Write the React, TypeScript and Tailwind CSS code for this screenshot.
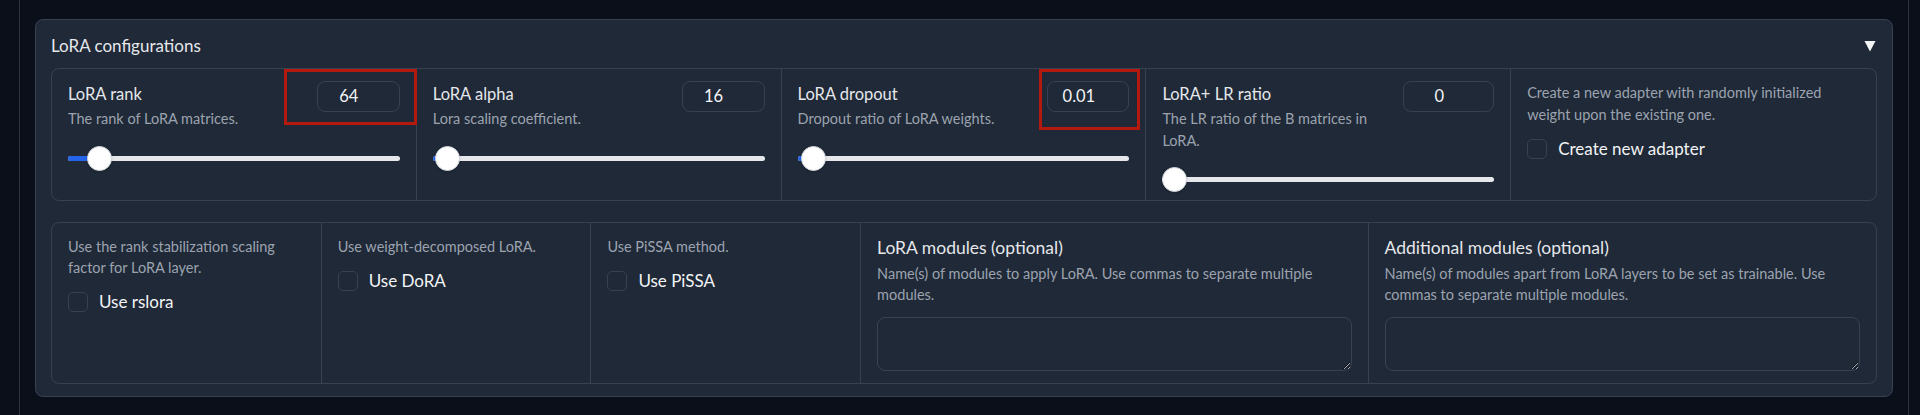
import React from 'react';

interface SliderFieldProps {
  label: string;
  info: string;
  value: string;
  fraction: number;
  inputWidth: string;
  highlight?: 'short' | 'tall';
}

const Slider: React.FC<{ fraction: number }> = ({ fraction }) => {
  // thumb travels between the two ends of the track, like a native range input
  const thumbLeft = `calc(${fraction} * (100% - 25px))`;
  const fillWidth = `calc(${fraction} * (100% - 25px) + 12.5px)`;
  return (
    <div className="relative mt-[16px] flex h-[25px] items-center">
      <div className="h-[5px] w-full overflow-hidden rounded-full bg-[#e5e7eb]">
        {fraction > 0 && <div className="h-full bg-[#2563eb]" style={{ width: fillWidth }} />}
      </div>
      <div
        className="absolute top-0 h-[25px] w-[25px] rounded-full border border-[#d1d5db] bg-white shadow-sm"
        style={{ left: thumbLeft }}
      />
    </div>
  );
};

const SliderField: React.FC<SliderFieldProps> = ({ label, info, value, fraction, inputWidth, highlight }) => (
  <div className="px-4 pt-3 pb-2">
    <div className="flex items-start justify-between gap-4">
      <div>
        <div className="text-[16.5px] leading-[26px] text-[#e5e7eb]">{label}</div>
        <div className="mt-px text-[14.5px] leading-[21.5px] text-[#9ca3af]">{info}</div>
      </div>
      <div className="relative shrink-0">
        <div
          className={`flex h-[31px] items-center justify-center rounded-lg border border-[#374151] pl-2 pr-[27px] text-[16.5px] text-[#f3f4f6] ${inputWidth}`}
        >
          <span className="w-full text-center">{value}</span>
        </div>
        {highlight === 'short' && (
          <div className="absolute top-[-12px] right-[-17px] h-[56px] w-[133px] border-[3px] border-[#b3190c]" />
        )}
        {highlight === 'tall' && (
          <div className="absolute top-[-12px] right-[-11px] h-[61px] w-[101px] border-[3px] border-[#b3190c]" />
        )}
      </div>
    </div>
    <Slider fraction={fraction} />
  </div>
);

const Checkbox: React.FC<{ label: string }> = ({ label }) => (
  <div className="mt-3 flex h-6 items-center gap-[11px]">
    <div className="h-[20px] w-[20px] shrink-0 rounded-[5px] border border-[#374151] bg-[#1f2937]" />
    <span className="text-[17px] leading-6 text-[#f3f4f6]">{label}</span>
  </div>
);

interface CheckFieldProps {
  info: string;
  label: string;
  box?: string;
  lead?: string;
}

const CheckField: React.FC<CheckFieldProps> = ({ info, label, box = 'pt-3', lead = 'leading-[21.5px]' }) => (
  <div className={`px-4 pb-3 ${box}`}>
    <div className={`text-[14.5px] text-[#9ca3af] ${lead}`}>{info}</div>
    <Checkbox label={label} />
  </div>
);

const TextField: React.FC<{ label: string; info: string }> = ({ label, info }) => (
  <div className="px-4 pt-[13px] pb-3">
    <div className="text-[17.5px] leading-6 text-[#e5e7eb]">{label}</div>
    <div className="mt-[3px] text-[14.5px] leading-[21px] text-[#9ca3af]">{info}</div>
    <textarea
      className="mt-3 block h-[54px] w-full resize-y rounded-lg border border-[#374151] bg-[#1f2937] [color-scheme:dark] outline-none"
      rows={2}
    />
  </div>
);

const App: React.FC = () => {
  return (
    <div className="h-[415px] overflow-hidden bg-[#0b0f19] font-['Lato','Noto_Sans',sans-serif]">
      <div className="mr-[11px] ml-[19px] h-full border-x border-[#2b3442] pt-[19px] pr-[15px] pl-[15px]">
        <div className="rounded-lg border border-[#374151] bg-[#1f2937] px-[15px] pt-[14px] pb-[12px]">
          <div className="flex h-6 items-center justify-between">
            <span className="text-[17px] text-[#e5e7eb]">LoRA configurations</span>
            <svg width="12" height="12" viewBox="0 0 12 12" className="mr-px">
              <polygon points="0.5,1 11.5,1 6,11.5" fill="#f3f4f6" />
            </svg>
          </div>

          <div className="mt-[10px] grid grid-cols-5 divide-x divide-[#374151] rounded-lg border border-[#374151]">
            <SliderField
              label="LoRA rank"
              info="The rank of LoRA matrices."
              value="64"
              fraction={0.0615}
              inputWidth="w-[83px]"
              highlight="short"
            />
            <SliderField
              label="LoRA alpha"
              info="Lora scaling coefficient."
              value="16"
              fraction={0.006}
              inputWidth="w-[83px]"
            />
            <SliderField
              label="LoRA dropout"
              info="Dropout ratio of LoRA weights."
              value="0.01"
              fraction={0.01}
              inputWidth="w-[82px]"
              highlight="tall"
            />
            <SliderField
              label="LoRA+ LR ratio"
              info="The LR ratio of the B matrices in LoRA."
              value="0"
              fraction={0}
              inputWidth="w-[91px]"
            />
            <CheckField
              box="pt-[13px]"
              info="Create a new adapter with randomly initialized weight upon the existing one."
              label="Create new adapter"
            />
          </div>

          <div className="mt-[21px] grid grid-cols-[270fr_270fr_270fr_508fr_508fr] divide-x divide-[#374151] rounded-lg border border-[#374151]">
            <CheckField
              box="pt-[13px]"
              lead="leading-[21px]"
              info="Use the rank stabilization scaling factor for LoRA layer."
              label="Use rslora"
            />
            <CheckField box="pt-[13px]" lead="leading-[21px]" info="Use weight-decomposed LoRA." label="Use DoRA" />
            <CheckField box="pt-[13px]" lead="leading-[21px]" info="Use PiSSA method." label="Use PiSSA" />
            <TextField
              label="LoRA modules (optional)"
              info="Name(s) of modules to apply LoRA. Use commas to separate multiple modules."
            />
            <TextField
              label="Additional modules (optional)"
              info="Name(s) of modules apart from LoRA layers to be set as trainable. Use commas to separate multiple modules."
            />
          </div>
        </div>
      </div>
    </div>
  );
};

export default App;
